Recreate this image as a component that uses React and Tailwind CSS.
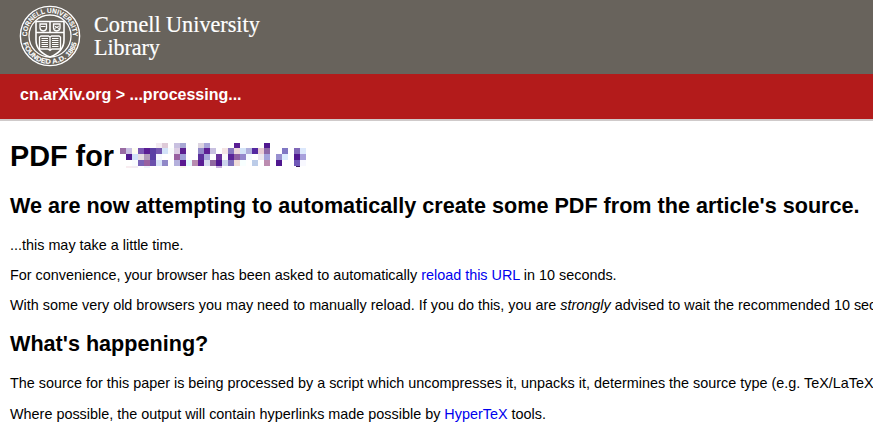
// Blurred-out paper id: one entry per 6px tile, [column, colour].
const mosaicRows = [
  { y: 1, h: 5, cells: [[6, '#f4ecf2'], [7, '#decad8'], [9, '#c8c0e0'], [10, '#a8a8d4'], [13, '#dcd4e0'], [14, '#a8a4d8'], [19, '#5a1e94'], [24, '#501890']] },
  { y: 6, h: 6, cells: [[0, '#996ba3'], [1, '#c9bfe2'], [2, '#fdfdf0'], [3, '#7a58b4'], [4, '#5a1e94'], [5, '#5a40a4'], [6, '#7458b0'], [7, '#d2e2f8'], [8, '#f8fcfc'], [9, '#dccde4'], [10, '#5a1e90'], [13, '#9088c8'], [14, '#5c1e94'], [15, '#c8c0e0'], [17, '#f4e4e4'], [18, '#8878c0'], [19, '#ecd8dc'], [20, '#d4e4f8'], [21, '#b0b0dc'], [22, '#5428a0'], [23, '#e8ccd4'], [24, '#8c68a8'], [27, '#8078c4'], [29, '#8068b8'], [30, '#dce8fc']] },
  { y: 12, h: 6, cells: [[1, '#501890'], [2, '#d0e0f8'], [3, '#e4dce2'], [4, '#b09cba'], [5, '#5840a4'], [6, '#f4f8fe'], [9, '#9860a0'], [10, '#a0a0d8'], [13, '#5a2e9c'], [14, '#a8a8dc'], [16, '#6a349c'], [17, '#fafafa'], [18, '#5a2498'], [19, '#9060a4'], [20, '#9488cc'], [21, '#f6fbff'], [23, '#ece8f0'], [24, '#a4a4dc'], [26, '#9890d0'], [27, '#dcecff'], [29, '#501890'], [30, '#a8a0dc']] },
  { y: 18, h: 6, cells: [[2, '#fafcff'], [3, '#7a64b8'], [4, '#9860a0'], [5, '#6a50ac'], [6, '#d8e4f8'], [7, '#9088c8'], [9, '#b4b0dc'], [10, '#5a1890'], [11, '#e4f8fc'], [12, '#b88cb0'], [13, '#5a1e94'], [14, '#d8dcf0'], [15, '#9068a0'], [16, '#501890'], [17, '#ccd4ec'], [18, '#8070bc'], [19, '#f0dcd8'], [20, '#f8ffff'], [22, '#bccce8'], [24, '#bc8cb0'], [26, '#501890'], [29, '#7058b8'], [30, '#f8f8ff']] },
  { y: 24, h: 2, cells: [[1, '#f8ecf0'], [2, '#f4ecf2'], [4, '#eef4fc'], [10, '#faf4ec'], [16, '#c8b0dc']] },
];

function Mosaic() {
  return (
    <svg className="ml-[6px] mt-[4px] block" width="188" height="30" shapeRendering="crispEdges" aria-hidden="true">
      {mosaicRows.map((row) =>
        row.cells.map(([col, fill]) => (
          <rect key={`${row.y}-${col}`} x={col * 6} y={row.y} width="6" height={row.h} fill={fill} />
        ))
      )}
      <rect x="176" y="24" width="4" height="1" fill="#3a1a60" />
    </svg>
  );
}

function Seal() {
  return (
    <svg className="block shrink-0" width="62" height="62" viewBox="-31 -31 62 62" fill="none" stroke="#fff">
      <defs>
        <path id="ringTop" d="M-19.8 11.4 A22.9 22.9 0 1 1 19.8 11.4" />
        <path id="ringBottom" d="M-27.8 0 A27.8 27.8 0 0 0 27.8 0" />
      </defs>
      <circle r="29.6" strokeWidth="1.4" />
      <circle r="21" strokeWidth="1.3" />
      <g fill="#fff" stroke="#fff" strokeWidth="0.1" className="font-['Liberation_Sans',Arial,sans-serif] text-[6.9px] font-bold">
        <text textAnchor="middle">
          <textPath href="#ringTop" startOffset="50%" textLength="73" lengthAdjust="spacingAndGlyphs">CORNELL UNIVERSITY</textPath>
        </text>
        <text textAnchor="middle">
          <textPath href="#ringBottom" startOffset="50%" textLength="73" lengthAdjust="spacingAndGlyphs">FOUNDED A.D. 1865</textPath>
        </text>
      </g>
      <path d="M-14 -14.5H14V4C14 13 8 18 0 21C-8 18 -14 13 -14 4Z" strokeWidth="1.6" />
      <path d="M-14 -3.5H14M0 -14.5V-3.5" strokeWidth="1.6" />
      <path d="M-10 -12H-3.5V-8C-3.5 -6.3 -5 -5.3 -6.7 -5C-8.5 -5.3 -10 -6.3 -10 -8ZM3.5 -12H10V-8C10 -6.3 8.5 -5.3 6.7 -5C5 -5.3 3.5 -6.3 3.5 -8Z" strokeWidth="1.3" />
      <path d="M-9 -9.5H-4.5M4.5 -10L9 -7.5M9 -10L4.5 -7.5" strokeWidth="1" />
      <path d="M-10.5 1L-9 0H-1.5L0 1L1.5 0H9L10.5 1V13H2L0 14.5L-2 13H-10.5ZM0 1V14" strokeWidth="1.3" />
      <path d="M-8.5 2.5H-2M-8.5 4.5H-2M-8.5 6.5H-2M-8.5 8.5H-2M-8.5 10.5H-2M2 2.5H8.5M2 4.5H8.5M2 6.5H8.5M2 8.5H8.5M2 10.5H8.5" strokeWidth="1.2" />
    </svg>
  );
}

export default function App() {
  return (
    <div className="h-[431px] w-[873px] overflow-hidden bg-white font-['Liberation_Sans',Arial,sans-serif] text-black">
      <header className="flex h-[74px] bg-[#68635c] pl-[19px] pt-[5px] text-white">
        <Seal />
        <div className="ml-[13px] mt-[8px] font-['Liberation_Serif',serif] text-[22.2px] leading-[24px] [-webkit-text-stroke:0.2px_#fff]">
          <div className="h-[23px]">Cornell University</div>
          <div className="h-[24px] tracking-[-0.1px]">Library</div>
        </div>
      </header>
      <div className="h-[47px] border-b-2 border-[#cfcaca] bg-[#b31b1b] pl-5 pt-[9px] text-base font-bold leading-6 text-white">
        cn.arXiv.org &gt; ...processing...
      </div>
      <main className="whitespace-nowrap pl-[10px] text-[14.4px] leading-[18px]">
        <div className="flex h-[53px] pt-[17px]">
          <h1 className="text-[28.8px] font-bold leading-9">PDF for</h1>
          <Mosaic />
        </div>
        <h2 className="mt-[19px] text-[21.6px] font-bold leading-[26px]">
          We are now attempting to automatically create some PDF from the article's source.
        </h2>
        <p className="mt-[17px]">...this may take a little time.</p>
        <p className="mt-3">
          For convenience, your browser has been asked to automatically <a className="text-[#0000ee]">reload this URL</a> in 10 seconds.
        </p>
        <p className="mt-3">
          With some very old browsers you may need to manually reload. If you do this, you are <em>strongly</em> advised to wait the recommended 10 seconds.
        </p>
        <h2 className="mt-[17px] text-[21.6px] font-bold leading-[26px]">What's happening?</h2>
        <p className="mt-[17px]">
          The source for this paper is being processed by a script which uncompresses it, unpacks it, determines the source type (e.g. TeX/LaTeX)
        </p>
        <p className="mt-[13px]">
          Where possible, the output will contain hyperlinks made possible by <a className="text-[#0000ee]">HyperTeX</a> tools.
        </p>
      </main>
    </div>
  );
}
